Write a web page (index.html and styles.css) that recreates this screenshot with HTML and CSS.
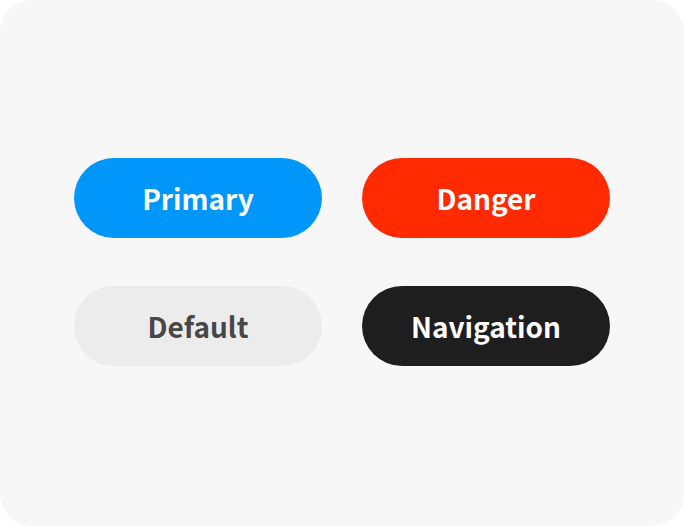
FILE: index.html
```html
<!DOCTYPE html>
<html lang="en">
<head>
    <meta charset="UTF-8">
    <meta name="viewport" content="width=device-width, initial-scale=1.0">
    <title>Buttons</title>
    <link rel="stylesheet" href="styles.css">
</head>
<body>
    <div class="card">
        <div class="button-grid">
            <button class="btn btn-primary">Primary</button>
            <button class="btn btn-danger">Danger</button>
            <button class="btn btn-default">Default</button>
            <button class="btn btn-nav">Navigation</button>
        </div>
    </div>
</body>
</html>
```

FILE: styles.css
```css
body {
    margin: 0;
    padding: 0;
    background-color: #fff;
    font-family: "Noto Sans CJK SC", "Noto Sans", sans-serif;
}

.card {
    width: 684px;
    height: 526px;
    background-color: #f7f7f7;
    border-radius: 32px;
    display: flex;
    align-items: center;
    justify-content: center;
}

.button-grid {
    display: grid;
    grid-template-columns: 248px 248px;
    column-gap: 40px;
    row-gap: 48px;
    margin-top: -2px;
}

.btn {
    height: 80px;
    border: none;
    border-radius: 40px;
    font-family: inherit;
    font-size: 28px;
    font-weight: 700;
    cursor: pointer;
    padding: 0;
}

.btn-primary {
    background-color: #0096fa;
    color: #fff;
}

.btn-danger {
    background-color: #ff2a00;
    color: #fff;
}

.btn-default {
    background-color: #ececec;
    color: #474747;
}

.btn-nav {
    background-color: #1e1e1e;
    color: #fff;
}
```
